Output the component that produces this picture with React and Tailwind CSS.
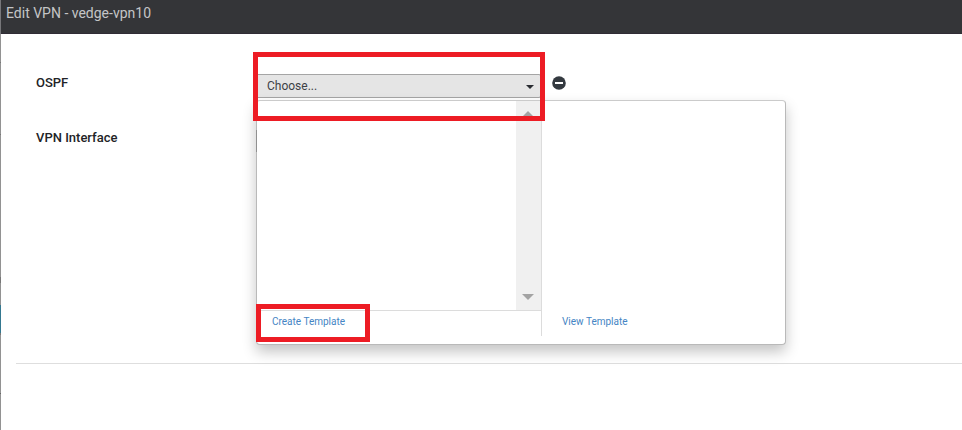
function TemplateMenu() {
  return (
    <div className="absolute top-[26px] left-0 flex h-[245px] w-[530px] rounded-[4px] border border-[#b9b9b9] border-t-[#cbcbcb] bg-white text-[10px] text-[#4585c4] shadow-[0_7px_14px_rgba(0,0,0,0.23)]">
      <div className="flex h-[235px] w-[285px] flex-col border-r border-[#dcdcdc]">
        <div className="flex h-[210px] justify-end border-b border-[#dcdcdc]">
          <div className="flex w-[25px] flex-col items-center justify-between bg-[#f0f0f0] pt-[10px] pr-px pb-[10px]">
            <svg className="h-[6px] w-[12px]" viewBox="0 0 12 6" fill="#a3a3a3">
              <path d="M0 6 6 0l6 6z" />
            </svg>
            <svg className="h-[6px] w-[12px]" viewBox="0 0 12 6" fill="#a3a3a3">
              <path d="M0 0h12L6 6z" />
            </svg>
          </div>
        </div>
        <a className="pt-[3px] pl-[15px] leading-4">Create Template</a>
      </div>
      <div className="flex flex-1 flex-col justify-end pb-[14px] pl-5">
        <a className="leading-4">View Template</a>
      </div>
      <div className="absolute top-[203px] -left-px h-[38px] w-[114px] border-[5px] border-[#ed1c24]" />
    </div>
  );
}

export default function App() {
  return (
    <div className="flex h-[430px] w-[962px] overflow-hidden bg-white font-[Roboto,sans-serif] text-[#222326]">
      <div className="flex w-px flex-col bg-[#929292]">
        <div className="h-[34px] bg-[#77777a]" />
        <div className="mt-[28px] h-px bg-[#777]" />
        <div className="mt-[71px] h-px bg-[#777]" />
        <div className="mt-[142px] h-[6px] bg-[#777]" />
        <div className="mt-[22px] h-[28px] bg-[#347890]" />
        <div className="h-[2px] bg-[#777]" />
        <div className="mt-[58px] h-px bg-[#666]" />
      </div>
      <div className="flex flex-1 flex-col">
        <header className="h-[34px] border-b border-[#302c35] bg-[#343538] pl-[5px] text-[14px] leading-[27px] text-[#c4c5c7]">
          Edit VPN - vedge-vpn10
        </header>
        <main className="ml-[15px] h-[330px] border-b border-[#dedede] pt-10 pl-5">
          <div className="flex h-[55px]">
            <label className="w-[220px] pt-px text-[13px] leading-4 font-medium">OSPF</label>
            <div className="relative z-10 h-6 w-[285px]">
              <button className="flex h-6 w-full items-center justify-between rounded-[2px] border border-[#a5a5a5] bg-[#e5e5e5] pr-[6px] pl-[10px] text-[12px] text-[#3d4145]">
                <span>Choose...</span>
                <svg className="mt-[2px] h-[4px] w-[8px]" viewBox="0 0 8 4" fill="#292c31">
                  <path d="M0 0h8L4 4z" />
                </svg>
              </button>
              <TemplateMenu />
              <div className="absolute -top-[22px] -left-[3px] h-[69px] w-[292px] border-[5px] border-[#ed1c24]" />
            </div>
            <svg className="mt-[2px] ml-[11px] size-[14px]" viewBox="0 0 14 14">
              <circle cx="7" cy="7" r="6.8" fill="#343a40" />
              <rect x="3" y="6" width="8" height="2" fill="#fff" />
            </svg>
          </div>
          <div className="flex">
            <label className="w-[220px] pt-px text-[13px] leading-4 font-medium">VPN Interface</label>
            <div className="relative z-20 mt-px h-[22px] w-px bg-[#909090]" />
          </div>
        </main>
      </div>
    </div>
  );
}
